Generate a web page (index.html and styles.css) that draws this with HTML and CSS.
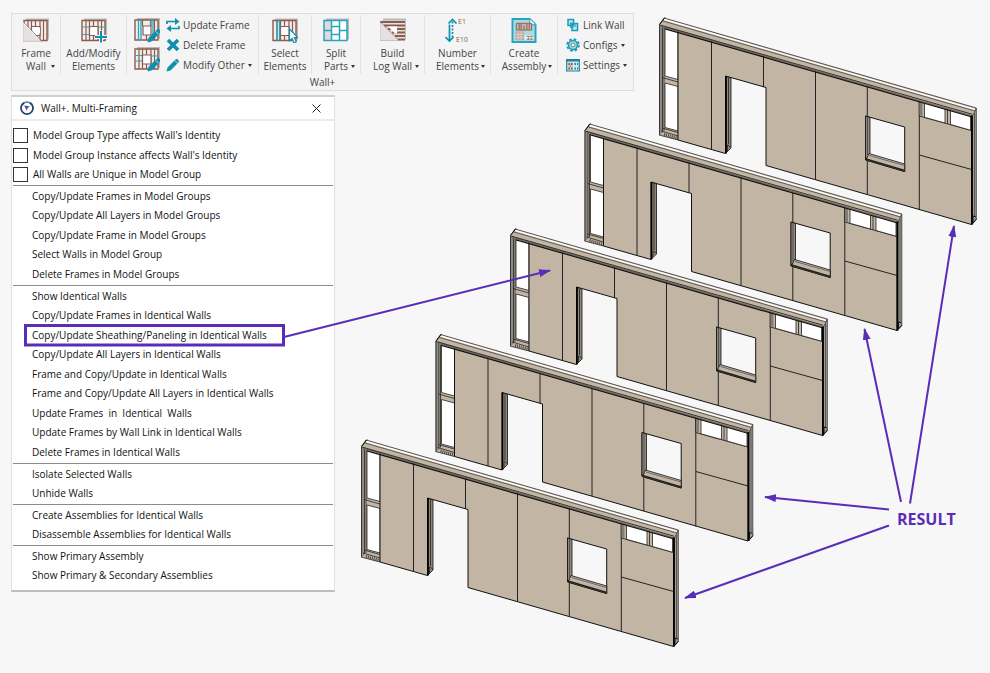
FILE: index.html
```
<!DOCTYPE html>
<html lang="en">
<head>
<meta charset="utf-8">
<title>Wall+. Multi-Framing</title>
<link rel="stylesheet" href="styles.css">
</head>
<body>
<svg class="defs" aria-hidden="true">
  <defs>
    <g id="frame-base">
      <path d="M3 0h23v21h-3V3H3z" fill="#bdb9b7"/>
      <path d="M1 2h23v20H1z" fill="#f3eeec" stroke="#8b5c4e" stroke-width="1.4"/>
    </g>
    <g id="frame-studs" fill="none" stroke="#8b5c4e" stroke-width="1.2">
      <path d="M5 2v20M8.500 2v20M17 2v20M20.500 2v20M12.500 2v6M12.500 17v5"/>
      <path d="M8.500 8h8.500v9H8.500z" fill="#fff"/>
    </g>
    <g id="pencil">
      <path d="M14 24l1.200-4.600L23.500 11.500c1-1 3.500 1.500 2.600 2.600L18 22.700z" fill="#0e8fb0" stroke="#0e8fb0"/>
      <path d="M21.500 13.200l2.800 2.800" stroke="#f3f3f3" stroke-width="0.8"/>
    </g>
    <g id="wall">
      <!-- bare studs at the left end -->
      <path d="M361 446.500L366 440 366 447 380 451.500V562L361 557z" fill="#c3b5a4"/>
      <path d="M361 446.500h3.500V555l-3.500 2z" fill="#8e8b86"/>
      <path d="M367 449l13 4V501.500l-13-3.500zM367 505l13 3.500V553l-13-3.500z" fill="#fff" stroke="#222" stroke-width="0.800"/>
      <path d="M361.500 446.500V557M364.500 449v105M366 450v103" stroke="#222" stroke-width="0.800" fill="none"/>
      <path d="M364 499.500l16 4.500M364 550l16 4.500M361 557l19 5M363 553l17 5" stroke="#222" stroke-width="0.800" fill="none"/>
      <path d="M366 556.500l14 4" stroke="#4a4540" stroke-width="3" stroke-dasharray="1 1" fill="none"/>
      <!-- sheathing -->
      <path fill-rule="evenodd" fill="#c3b5a4" stroke="#111" stroke-width="1" d="M380 452L673.500 537.500V646.500L468 587.500V509.500L427.500 498V575.500L380 562zM567.500 538L606.700 549V593.500L567.500 582z"/>
      <path d="M413.500 462v109.500M465.500 477v32M517.500 492v109.500M569.300 507v32M569.300 583v33.500M621.300 522v110M621.300 577l52.300 14.500" stroke="#222" stroke-width="1" fill="none"/>
      <!-- door jamb -->
      <path d="M428 498.500l5 1.500v70l-5 5z" fill="#8e8677" stroke="#111" stroke-width="0.800"/>
      <path d="M428 498v77.500" stroke="#000" stroke-width="1.600"/>
      <path d="M430.500 500v66M429.500 573v-6l3.500 2" stroke="#222" stroke-width="0.800" fill="none"/>
      <!-- window -->
      <path d="M567.500 538l4.500 1.500v37l-4.500 5z" fill="#908880" stroke="#111" stroke-width="0.800"/>
      <path d="M569.500 539v38" stroke="#444" stroke-width="0.800"/>
      <path d="M571 575.500l35.700 10.500v7.500L568 582z" fill="#c3b5a4" stroke="#111" stroke-width="0.800"/>
      <path d="M571.500 577.500l35 10" stroke="#555" stroke-width="0.800"/>
      <path d="M568 581l38.700 11.500" stroke="#222" stroke-width="1.500"/>
      <!-- high openings -->
      <path d="M621.300 521l52.200 15.500V552.500L621.300 538z" fill="#c3b5a4" stroke="#111" stroke-width="0.800"/>
      <path d="M621.500 522h3v16l-3-1z" fill="#857d72"/>
      <path d="M626.500 524l20.500 6v15l-20.500-5.700zM652.500 531.500l20 5.700v15l-20-5.700z" fill="#fff" stroke="#222" stroke-width="0.800"/>
      <path d="M649.500 531v15" stroke="#222" stroke-width="0.800"/>
      <!-- top plate -->
      <path d="M361 447L366 440 678.300 530 674 538z" fill="#c3b5a4"/>
      <path d="M361 447L366 440 678.300 530" stroke="#333" stroke-width="0.800" fill="none"/>
      <path d="M366 441.500l311 90" stroke="#fff" stroke-width="1.400"/>
      <path d="M365 443l312 90" stroke="#444" stroke-width="0.800"/>
      <path d="M362 446l5-6.500" stroke="#111"/>
      <path d="M363 448.400L674 538" stroke="#746b60" stroke-width="1.400"/>
      <path d="M361.500 446.900L674 536.200" stroke="#222" stroke-width="0.900"/>
      <path d="M367 450.800L674 539" stroke="#111" stroke-width="1.200"/>
      <!-- right end -->
      <path d="M674 539l4.300-9V641.500l-4.300 5z" fill="#a39d94" stroke="#333" stroke-width="0.800"/>
      <path d="M676.500 535v103" stroke="#444" stroke-width="0.800"/>
      <path d="M674 537.500V646.500" stroke="#000" stroke-width="1.800"/>
      <path d="M675 644v-6l3 1M675 645l3.500-4" stroke="#111" fill="none"/>
    </g>
    <marker id="arrow-head" viewBox="0 0 12 8" refX="11" refY="4" markerWidth="12" markerHeight="8" markerUnits="userSpaceOnUse" orient="auto">
      <path d="M0 0l12 4-12 4z" fill="#5a2db9"/>
    </marker>
  </defs>
</svg>

<main class="page">
  <section class="ribbon" aria-label="Ribbon">
    <div class="tools">
      <div class="group">
        <button class="tool has-menu"><svg class="icon" viewBox="0 0 26 24"><use href="#frame-base"/><use href="#frame-studs"/><path d="M-1 2L19 23.800H-1z" fill="#f4f4f4"/><path d="M0 5L17 22.800H0z" fill="#e6e1df"/><path d="M0 3l19 19.800" stroke="#777" stroke-width="0.800"/><path d="M0 3v19.800h19" stroke="#bbb" stroke-width="0.800" fill="none"/><path d="M9 9h8v6h-3z" fill="#fff"/></svg><span>Frame<br>Wall</span></button>
      </div>
      <div class="group">
        <button class="tool"><svg class="icon" viewBox="0 0 26 24"><use href="#frame-base"/><use href="#frame-studs"/><path d="M1.500 8.500H8M1.500 16H8M17.500 8.500H23.500" stroke="#25a5bf" stroke-width="1.200"/><path d="M20 12v12M14 18.500h12" stroke="#f3f3f3" stroke-width="4"/><path d="M20 12.500v11.500M14 18.500h12" stroke="#0e8fb0" stroke-width="2"/></svg><span>Add/Modify<br>Elements</span></button>
      </div>
      <div class="group split">
        <div class="icon-stack">
          <button class="icon-button" aria-label="Modify studs"><svg class="icon" viewBox="0 0 26 25"><use href="#frame-base"/><path d="M8.500 2v6M17 2v6M12.500 17v5M20.500 2v20" stroke="#8b5c4e" stroke-width="1.200"/><path d="M4.500 2v20M7 2v20M16.500 2v6M19 2v20" stroke="#25a5bf" stroke-width="1.300"/><path d="M9 8h8v9H9z" fill="#fff" stroke="#8b5c4e" stroke-width="1.200"/><use href="#pencil"/></svg></button>
          <button class="icon-button" aria-label="Modify blocking"><svg class="icon" viewBox="0 0 26 25"><use href="#frame-base"/><use href="#frame-studs"/><path d="M1.500 8.500H8M1.500 14H8M17.500 9H23.500" stroke="#25a5bf" stroke-width="1.200"/><use href="#pencil"/></svg></button>
        </div>
        <div class="stack">
          <button class="small"><svg viewBox="0 0 14 14"><path d="M1 6V3.500h9M13 8v2.500H4" fill="none" stroke="#0e8fb0" stroke-width="1.700"/><path d="M9 0l4.500 3.500L9 7zM5 7L.5 10.500 5 14z" fill="#0e8fb0"/></svg>Update Frame</button>
          <button class="small"><svg viewBox="0 0 14 14"><path d="M2 2l10 10M12 2L2 12" stroke="#0e8fb0" stroke-width="3.600"/></svg>Delete Frame</button>
          <button class="small"><svg viewBox="0 0 14 14"><path d="M.5 13.500l1-4L9.800 1.300c1-1.200 4 1.600 2.900 2.900L4.500 12.500z" fill="#0e8fb0"/><path d="M8.800 2.500l2.800 2.800" stroke="#f3f3f3" stroke-width="0.800"/></svg>Modify Other<i class="caret"></i></button>
        </div>
      </div>
      <div class="group">
        <button class="tool"><svg class="icon" viewBox="0 0 26 24"><use href="#frame-base"/><use href="#frame-studs"/><path d="M5 2v20M7.500 2v20" stroke="#25a5bf" stroke-width="1.300"/><path d="M17.500 10.500v11.800l2.600-2.300 1.900 4.200 2.300-1-2-4.200h3.400z" fill="#fff" stroke="#0e8fb0" stroke-width="1.200"/></svg><span>Select<br>Elements</span></button>
      </div>
      <div class="group">
        <button class="tool has-menu"><svg class="icon" viewBox="0 0 26 24"><path d="M3 0h23v21h-3V3H3z" fill="#bdb9b7"/><path d="M1 2h23v20H1z" fill="#fff"/><path d="M1 2h7v20H1z" fill="#e3d9d5"/><path d="M1 2h23v20H1zM8.500 2v20M16.500 2v20M1 12h7.500M8.500 8h8M8.500 16h8M16.500 12H24" fill="none" stroke="#25a5bf" stroke-width="1.500"/></svg><span>Split<br>Parts</span></button>
      </div>
      <div class="group">
        <button class="tool has-menu"><svg class="icon" viewBox="0 0 26 24"><path d="M3 0h23v21h-3V3H3z" fill="#bdb9b7"/><path d="M0 2h25v20H0z" fill="#e6e1df"/><path d="M0 3.500h25M4 7h21M8 10.500h17M12 14h13M15 17.500h10M18 21h7" stroke="#8b5c4e" stroke-width="2"/><path d="M0 2v20h19" fill="none" stroke="#bbb" stroke-width="0.800"/><path d="M0 3l19 19" stroke="#777" stroke-width="0.800"/><path d="M8 8h9v7h-2z" fill="#fff"/></svg><span>Build<br>Log Wall</span></button>
      </div>
      <div class="group">
        <button class="tool has-menu"><svg class="icon" viewBox="0 0 26 24"><path d="M4.500 6v16M.5 18.500l4 4 4-4" fill="none" stroke="#0e8fb0" stroke-width="1.700"/><path d="M7.500 19V2" stroke="#0e8fb0" stroke-width="1.700" stroke-dasharray="2 1.500"/><path d="M3.500 5l4-4 4 4" fill="none" stroke="#0e8fb0" stroke-width="1.700"/><text class="mark" x="13" y="5">E1</text><text class="mark" x="11" y="23">E10</text></svg><span>Number<br>Elements</span></button>
      </div>
      <div class="group">
        <button class="tool has-menu"><svg class="icon" viewBox="0 0 26 26"><path d="M1 1h18l6 6v18H1z" fill="#a9dbe4" stroke="#25a5bf" stroke-width="2"/><path d="M19 1v6h6" fill="#fff" stroke="#25a5bf"/><path d="M5 5.500h16v7H5z" fill="#c9b5ad" stroke="#8b5c4e"/><path d="M8 6v6M10 6v6M13 8v4M16 6v6M18.500 6v6" stroke="#8b5c4e"/><path d="M4 14h9v9H4z" fill="#bfa99f"/><path d="M4 17h9M4 20h9M7 14v9M10 14v9" stroke="#e9dfdb" stroke-width="0.700"/><path d="M14 18h9v5h-9z" fill="#fff"/><path d="M15 19h8M15 22h8M17.500 19v4M20.500 19v4" stroke="#8b5c4e" stroke-width="0.800"/></svg><span>Create<br>Assembly</span></button>
      </div>
      <div class="group">
        <div class="stack">
          <button class="small"><svg viewBox="0 0 14 14"><path d="M2 1.500h5.500v6H2zM6 5.500h5.500v7H6z" fill="#bfe3ea" stroke="#1a9dba" stroke-width="1.500"/><path d="M4.500 4.500v5h3M9 9V5" fill="none" stroke="#1a9dba"/></svg>Link Wall</button>
          <button class="small"><svg viewBox="0 0 14 14"><circle cx="7" cy="7" r="5.800" fill="none" stroke="#1a9dba" stroke-width="1.900" stroke-dasharray="2.600 1.950"/><circle cx="7" cy="7" r="4.400" fill="#d5d0cd" stroke="#1a9dba" stroke-width="1.500"/><circle cx="7" cy="7" r="2" fill="#fff" stroke="#1a9dba"/></svg>Configs<i class="caret"></i></button>
          <button class="small"><svg viewBox="0 0 14 14"><path d="M.7 1.500h12.600v11.500H.7z" fill="#d3eaee" stroke="#1784a0" stroke-width="1.200"/><path d="M.5 1h13v2.500H.5z" fill="#1784a0"/><path d="M2 4.500h5v7.500H2z" fill="#d8c8c0"/><path d="M2.500 5h1.500v2H2.500zM5 5h1.500v2H5zM2.500 9.500h1.500v2H2.500zM5 9.500h1.500v2H5zM4 7.500h1v1H4z" fill="#8b5c4e"/><path d="M8.500 6h1.500M11 6h1M8.500 10.500h1.500M11 10.500h1" stroke="#1784a0" stroke-width="2"/></svg>Settings<i class="caret"></i></button>
        </div>
      </div>
    </div>
    <h2 class="ribbon-title">Wall+</h2>
  </section>

  <section class="panel" aria-labelledby="panel-title">
    <header class="panel-head">
      <svg class="logo" viewBox="0 0 14 14"><path d="M9.500 1.600A6 6 0 1 1 4.500 1.600" fill="none" stroke="#1f4766" stroke-width="1.800"/><path d="M4.500 1.600a6 6 0 0 1 5 0" fill="none" stroke="#3a86a8" stroke-width="1.500"/><path d="M4.200 4.500l5.800 1-2.400 1.500L6.800 9.800z" fill="#5a3fae"/></svg>
      <h1 id="panel-title">Wall+. Multi-Framing</h1>
      <button class="close" aria-label="Close"><svg viewBox="0 0 9 9"><path d="M.5.5l8 8M8.500.5l-8 8" stroke="#222" stroke-width="1"/></svg></button>
    </header>
    <div class="options">
      <label><input type="checkbox">Model Group Type affects Wall's Identity</label>
      <label><input type="checkbox">Model Group Instance affects Wall's Identity</label>
      <label><input type="checkbox">All Walls are Unique in Model Group</label>
    </div>
    <ul class="menu">
      <li><button>Copy/Update Frames in Model Groups</button></li>
      <li><button>Copy/Update All Layers in Model Groups</button></li>
      <li><button>Copy/Update Frame in Model Groups</button></li>
      <li><button>Select Walls in Model Group</button></li>
      <li><button>Delete Frames in Model Groups</button></li>
    </ul>
    <ul class="menu">
      <li><button>Show Identical Walls</button></li>
      <li><button>Copy/Update Frames in Identical Walls</button></li>
      <li><button>Copy/Update Sheathing/Paneling in Identical Walls</button></li>
      <li><button>Copy/Update All Layers in Identical Walls</button></li>
      <li><button>Frame and Copy/Update in Identical Walls</button></li>
      <li><button>Frame and Copy/Update All Layers in Identical Walls</button></li>
      <li><button>Update Frames  in  Identical  Walls</button></li>
      <li><button>Update Frames by Wall Link in Identical Walls</button></li>
      <li><button>Delete Frames in Identical Walls</button></li>
    </ul>
    <ul class="menu">
      <li><button>Isolate Selected Walls</button></li>
      <li><button>Unhide Walls</button></li>
    </ul>
    <ul class="menu">
      <li><button>Create Assemblies for Identical Walls</button></li>
      <li><button>Disassemble Assemblies for Identical Walls</button></li>
    </ul>
    <ul class="menu">
      <li><button>Show Primary Assembly</button></li>
      <li><button>Show Primary &amp; Secondary Assemblies</button></li>
    </ul>
  </section>

  <svg class="scene" width="990" height="673" viewBox="0 0 990 673" role="img" aria-label="Five identical framed walls">
    <use href="#wall" x="298" y="-422"/>
    <use href="#wall" x="223.500" y="-316"/>
    <use href="#wall" x="149" y="-211"/>
    <use href="#wall" x="74.500" y="-105.500"/>
    <use href="#wall"/>
    <g class="callout">
      <rect x="25.500" y="325.500" width="258" height="19.500" stroke-width="3"/>
      <path d="M284 337L550 270.500" marker-end="url(#arrow-head)"/>
      <path d="M889 509.500L765 497" marker-end="url(#arrow-head)"/>
      <path d="M889 525.500L685 598" marker-end="url(#arrow-head)"/>
      <path d="M901 502L864.500 329" marker-end="url(#arrow-head)"/>
      <path d="M910 503.500L954 226" marker-end="url(#arrow-head)"/>
    </g>
    <text class="result" x="897" y="525">RESULT</text>
  </svg>
</main>
</body>
</html>
```
FILE: styles.css
```
* { box-sizing: border-box; }

body {
  margin: 0;
  background: #f7f7f7;
  color: #222;
  font: 10px/13px "Open Sans", "Noto Sans", sans-serif;
}

button {
  margin: 0;
  padding: 0;
  border: 0;
  background: none;
  color: inherit;
  font: inherit;
  cursor: pointer;
}

h1, h2 { margin: 0; font: inherit; }
svg { display: block; }

.defs { position: absolute; width: 0; height: 0; }

.page {
  position: relative;
  min-height: 100vh;
  padding: 13px 11px;
}

/* ribbon */
.ribbon {
  max-width: 623px;
  padding: 1px 0 0;
  border: 1px solid #dedede;
  background: #f4f4f4;
  color: #444;
}

.tools {
  display: grid;
  grid-template-columns: 49fr 66fr 132fr 53fr 49fr 64fr 66fr 67fr 75fr;
}

.group {
  height: 59px;
  border-right: 1px solid #e2e2e2;
}
.group:last-child { border-right: 0; }

.tool {
  position: relative;
  display: flex;
  flex-direction: column;
  align-items: center;
  gap: 4px;
  width: 100%;
  padding-top: 3px;
}
.tool .icon { width: 26px; height: 25px; }

.has-menu::after,
.caret {
  border: 2px solid transparent;
  border-top: 3px solid #333;
  border-bottom: 0;
}
.has-menu::after {
  content: "";
  position: absolute;
  right: 5px;
  bottom: 5px;
}

.mark { font: 7px "Open Sans", sans-serif; fill: #8b5c4e; }

.split { display: flex; }
.icon-stack {
  display: flex;
  flex-direction: column;
  gap: 4px;
  padding: 3px 6px 0 7px;
}
.icon-button .icon { width: 26px; height: 25px; }

.stack { display: grid; grid-auto-rows: 20px; }
.group > .stack:first-child { padding-left: 8px; }
.small {
  display: flex;
  align-items: center;
  gap: 3px;
}
.small svg { width: 14px; height: 14px; }

.ribbon-title { padding: 2px 0 1px; line-height: 13px; text-align: center; }

/* panel */
.panel {
  width: 324px;
  max-width: 100%;
  margin-top: 4px;
  padding-bottom: 4px;
  border: 1px solid #e0e0e0;
  border-top: 2px solid #cfcfcf;
  border-bottom: 2px solid #bdbdbd;
  background: #fff;
  color: #111;
}

.panel-head {
  display: flex;
  align-items: center;
  gap: 7px;
  height: 24px;
  padding: 0 13px 0 8px;
  border-bottom: 2px solid #ebebeb;
}
.logo { width: 14px; height: 14px; }
.close { margin-left: auto; }
.close svg { width: 9px; height: 9px; }

.options { padding: 5px 1px 0; }
.options label {
  display: flex;
  align-items: center;
  gap: 5px;
  height: 19px;
}
.options label:nth-child(2) { height: 20px; }
.options input {
  appearance: none;
  width: 15px;
  height: 15px;
  margin: 0;
  border: 1px solid #333;
  background: #fff;
}
.options input:checked { background: #5a2db9; }

.menu {
  margin: 0 1px;
  padding: 0 0 1px;
  border-top: 1px solid #8c8c8c;
  list-style: none;
}
.options + .menu { margin-top: 1px; }
.menu li { height: 20px; }
.menu li:nth-child(even) { height: 19px; }
.menu button {
  width: 100%;
  height: 100%;
  padding-left: 19px;
  text-align: left;
  white-space: pre;
}

/* drawing and callouts over the page */
.scene {
  position: absolute;
  top: 0;
  left: 0;
  pointer-events: none;
}
.callout { fill: none; stroke: #5a2db9; stroke-width: 2; }
.result {
  fill: #5a2db9;
  font: bold 16px "Open Sans", "Noto Sans", sans-serif;
}
```
